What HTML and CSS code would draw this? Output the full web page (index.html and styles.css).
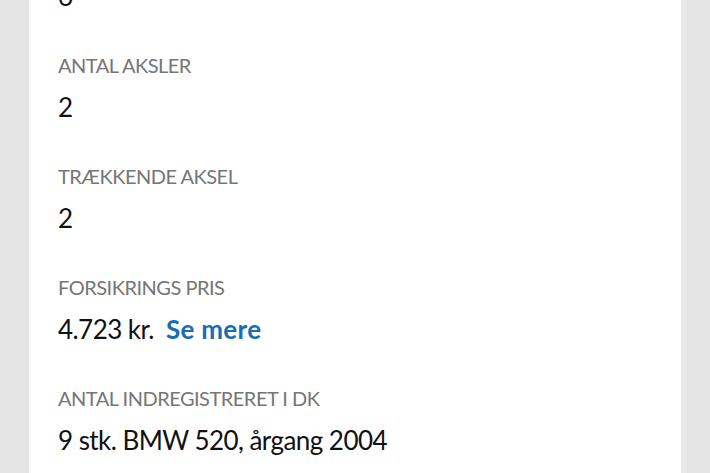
FILE: index.html
```html
<!DOCTYPE html>
<html lang="da">
<head>
<meta charset="utf-8">
<title>Bil detaljer</title>
<link rel="stylesheet" href="styles.css">
</head>
<body>
<main class="card">
  <dl class="facts">
    <div class="fact">
      <dt class="label">ANTAL DØRE</dt>
      <dd class="value">6</dd>
    </div>
    <div class="fact">
      <dt class="label">ANTAL AKSLER</dt>
      <dd class="value">2</dd>
    </div>
    <div class="fact">
      <dt class="label">TRÆKKENDE AKSEL</dt>
      <dd class="value">2</dd>
    </div>
    <div class="fact">
      <dt class="label">FORSIKRINGS PRIS</dt>
      <dd class="value">4.723 kr.<a class="more" href="#">Se mere</a></dd>
    </div>
    <div class="fact">
      <dt class="label">ANTAL INDREGISTRERET I DK</dt>
      <dd class="value">9 stk. BMW 520, årgang 2004</dd>
    </div>
  </dl>
</main>
</body>
</html>
```
FILE: styles.css
```css
html {
  background: #e4e4e4;
}
body {
  margin: 0;
  height: 473px;
  overflow: hidden;
  font-family: Lato, "Open Sans", sans-serif;
}
.card {
  background: #ffffff;
  margin: -58px 0 0 29px;
  width: 652px;
  padding: 0 0 60px 29px;
  box-sizing: border-box;
  box-shadow: 6px 0 0 #e9e9e9;
}
.facts {
  margin: 0;
  display: flex;
  flex-direction: column;
  gap: 41px;
}
.fact {
  display: flex;
  flex-direction: column;
  gap: 14px;
}
.label {
  font-size: 20px;
  line-height: 24px;
  letter-spacing: -0.5px;
  color: #767676;
}
.value {
  margin: 0;
  font-size: 26px;
  line-height: 32px;
  letter-spacing: -0.55px;
  color: #111111;
}
.more {
  margin-left: 12px;
  letter-spacing: 0.3px;
  color: #1b6db3;
  font-weight: 700;
  text-decoration: none;
}
```
